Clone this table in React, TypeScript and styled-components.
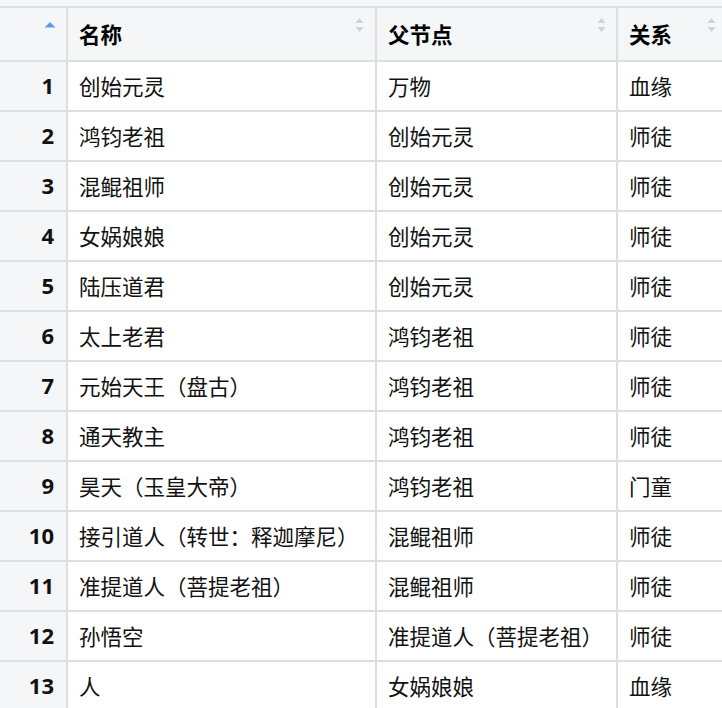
import React from "react";
import styled, { createGlobalStyle } from "styled-components";

type Row = {
  name: string;
  parent: string;
  relation: string;
};

const rows: Row[] = [
  { name: "创始元灵", parent: "万物", relation: "血缘" },
  { name: "鸿钧老祖", parent: "创始元灵", relation: "师徒" },
  { name: "混鲲祖师", parent: "创始元灵", relation: "师徒" },
  { name: "女娲娘娘", parent: "创始元灵", relation: "师徒" },
  { name: "陆压道君", parent: "创始元灵", relation: "师徒" },
  { name: "太上老君", parent: "鸿钧老祖", relation: "师徒" },
  { name: "元始天王（盘古）", parent: "鸿钧老祖", relation: "师徒" },
  { name: "通天教主", parent: "鸿钧老祖", relation: "师徒" },
  { name: "昊天（玉皇大帝）", parent: "鸿钧老祖", relation: "门童" },
  { name: "接引道人（转世：释迦摩尼）", parent: "混鲲祖师", relation: "师徒" },
  { name: "准提道人（菩提老祖）", parent: "混鲲祖师", relation: "师徒" },
  { name: "孙悟空", parent: "准提道人（菩提老祖）", relation: "师徒" },
  { name: "人", parent: "女娲娘娘", relation: "血缘" },
];

const GlobalStyle = createGlobalStyle`
  html, body {
    margin: 0;
    padding: 0;
    background: #f5f6f8;
    overflow: hidden;
  }
  body {
    font-family: "Noto Sans CJK SC", "Noto Sans", sans-serif;
    color: #111;
  }
`;

const Page = styled.div`
  padding-top: 6px;
  width: 722px;
  height: 708px;
  overflow: hidden;
`;

const Table = styled.table`
  border-collapse: separate;
  border-spacing: 0;
  table-layout: fixed;
  width: 732px;
  border-top: 2px solid #dcdee1;
`;

const HeadCell = styled.th<{ $width: number }>`
  position: relative;
  width: ${(p) => p.$width}px;
  height: 51px;
  padding: 0 11px 1px;
  box-sizing: content-box;
  background: #f5f6f8;
  border-right: 2px solid #dcdee1;
  border-bottom: 2px solid #dcdee1;
  text-align: left;
  font-size: 21.5px;
  font-weight: 700;
  line-height: 51px;
  white-space: nowrap;
  color: #000;
`;

const Cell = styled.td<{ $index?: boolean }>`
  height: 47px;
  padding: 0 ${(p) => (p.$index ? "12px" : "11px")} 1px;
  background: ${(p) => (p.$index ? "#f5f6f8" : "#ffffff")};
  border-right: 2px solid #dcdee1;
  border-bottom: 2px solid #dcdee1;
  text-align: ${(p) => (p.$index ? "right" : "left")};
  font-family: ${(p) =>
    p.$index
      ? '"Open Sans", "Noto Sans", sans-serif'
      : '"Noto Sans CJK SC", "Noto Sans", sans-serif'};
  font-size: ${(p) => (p.$index ? "22px" : "21.5px")};
  font-weight: ${(p) => (p.$index ? 700 : 400)};
  line-height: 47px;
  white-space: nowrap;
  overflow: hidden;
  color: #111;
`;

const SortIcon = styled.svg<{ $right: number; $top: number }>`
  position: absolute;
  top: ${(p) => p.$top}px;
  right: ${(p) => p.$right}px;
`;

const SortBoth = ({ right }: { right: number }) => (
  <SortIcon $right={right} $top={9} width="9" height="16" viewBox="0 0 9 16">
    <path d="M4.5 1 L8.5 6 L0.5 6 Z" fill="#cfd1d5" />
    <path d="M4.5 15 L8.5 10 L0.5 10 Z" fill="#cfd1d5" />
  </SortIcon>
);

const SortAsc = () => (
  <SortIcon $right={10} $top={13} width="12" height="8" viewBox="0 0 12 8">
    <path d="M6 1 L11.5 6.5 L0.5 6.5 Z" fill="#5b9bea" />
  </SortIcon>
);

export default function App() {
  return (
    <Page>
      <GlobalStyle />
      <Table>
        <thead>
          <tr>
            <HeadCell $width={44}>
              <SortAsc />
            </HeadCell>
            <HeadCell $width={285}>
              名称
              <SortBoth right={11} />
            </HeadCell>
            <HeadCell $width={217}>
              父节点
              <SortBoth right={10} />
            </HeadCell>
            <HeadCell $width={92}>
              关系
              <SortBoth right={16} />
            </HeadCell>
          </tr>
        </thead>
        <tbody>
          {rows.map((r, i) => (
            <tr key={i}>
              <Cell $index>{i + 1}</Cell>
              <Cell>{r.name}</Cell>
              <Cell>{r.parent}</Cell>
              <Cell>{r.relation}</Cell>
            </tr>
          ))}
        </tbody>
      </Table>
    </Page>
  );
}
